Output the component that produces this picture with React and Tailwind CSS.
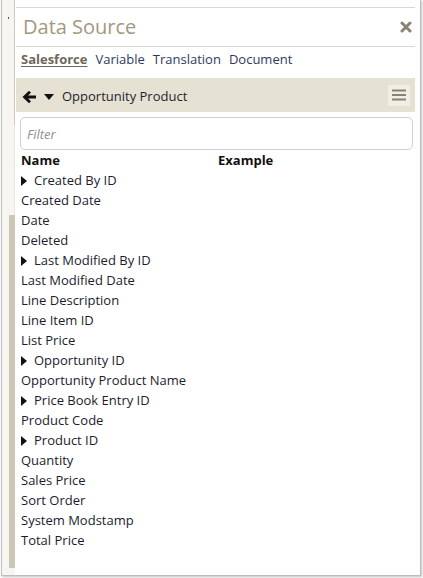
import React from 'react';

const rows = [
  { name: 'Created By ID', child: true },
  { name: 'Created Date' },
  { name: 'Date' },
  { name: 'Deleted' },
  { name: 'Last Modified By ID', child: true },
  { name: 'Last Modified Date' },
  { name: 'Line Description' },
  { name: 'Line Item ID' },
  { name: 'List Price' },
  { name: 'Opportunity ID', child: true },
  { name: 'Opportunity Product Name' },
  { name: 'Price Book Entry ID', child: true },
  { name: 'Product Code' },
  { name: 'Product ID', child: true },
  { name: 'Quantity' },
  { name: 'Sales Price' },
  { name: 'Sort Order' },
  { name: 'System Modstamp' },
  { name: 'Total Price' },
];

const Caret = ({ dir = 'right' }) =>
  dir === 'right' ? (
    <svg width="6" height="10" viewBox="0 0 6 10" className="shrink-0">
      <path d="M0 0 L6 5 L0 10 Z" fill="#111" />
    </svg>
  ) : (
    <svg width="10" height="6" viewBox="0 0 10 6" className="shrink-0">
      <path d="M0 0 L10 0 L5 6 Z" fill="#111" />
    </svg>
  );

export default function App() {
  return (
    <div className="w-[423px] h-[578px] bg-white" style={{ fontFamily: '"Open Sans", "Noto Sans", sans-serif' }}>
      <div className="ml-px w-[420px] h-[576px] flex border-l border-r border-b border-[#bdbdbd] shadow-[1px_1px_2px_rgba(0,0,0,0.25)] bg-white">
        {/* left splitter strip */}
        <div className="w-[13px] shrink-0 flex flex-col bg-[#f6f5f1]">
          <div className="h-[125px] flex justify-end">
            <div className="relative w-px h-full bg-[#cfcabb]">
              <div className="absolute left-[-6px] top-[17px] w-px h-[2px] bg-[#555]" />
            </div>
          </div>
          <div className="h-[90px] flex justify-end">
            <div className="w-px h-full bg-[#ebe8e0]" />
          </div>
          <div className="h-[353px] flex justify-end">
            <div className="w-[6px] h-full bg-[#cdc7b5]" />
          </div>
        </div>

        {/* panel */}
        <div className="flex-1 pl-px pr-[5px]">
          <div className="mt-[7px] border-t border-[#dcd8cf]">
            <div className="h-[39px] flex items-center justify-between pl-[7px] pr-[3px] border-b border-[#dcd8cf]">
              <span className="text-[20px] text-[#a3977f] leading-none">Data Source</span>
              <svg width="12" height="12" viewBox="0 0 12 12">
                <path d="M2 2 L10 10 M10 2 L2 10" stroke="#8b8270" strokeWidth="3" strokeLinecap="round" />
              </svg>
            </div>
            <div className="h-[31px] flex items-center gap-[8px] pl-[5px] pb-[6px] text-[13px]">
              <span className="font-bold text-[#6e675b] underline underline-offset-2">Salesforce</span>
              <span className="text-[#2e3a63]">Variable</span>
              <span className="text-[#2e3a63]">Translation</span>
              <span className="text-[#2e3a63]">Document</span>
            </div>
            <div className="h-[34px] bg-[#e5e1d3] flex items-center pl-[6px] pr-[5px] pt-[3px]">
              <svg width="15" height="14" viewBox="0 0 15 14" className="shrink-0">
                <path d="M14 7 H3.5 M8 1.8 L2.5 7 L8 12.2" stroke="#111" strokeWidth="2.8" fill="none" strokeLinejoin="miter" />
              </svg>
              <span className="ml-[7px]"><Caret dir="down" /></span>
              <span className="ml-[8px] text-[13px] text-[#1f1f2e]">Opportunity Product</span>
              <div className="ml-auto mb-[3px] w-[22px] h-[21px] bg-[#f1eee5] flex items-center justify-center">
                <svg width="14" height="12" viewBox="0 0 14 12">
                  <path d="M0 1.5 H14 M0 6 H14 M0 10.5 H14" stroke="#8b8270" strokeWidth="2.2" />
                </svg>
              </div>
            </div>
            <div className="px-[4px] pt-[5px]">
              <div className="h-[33px] mr-[-2px] border border-[#cfcfcf] rounded-[5px] flex items-center px-[6px] pt-[2px]">
                <span className="text-[13px] italic text-[#8e8e8e]">Filter</span>
              </div>
            </div>
            <div className="pl-[5px] pt-[1px]">
              <div className="h-[20px] flex items-center text-[13px] font-bold text-[#111]">
                <span className="w-[197px]">Name</span>
                <span>Example</span>
              </div>
              {rows.map((r) => (
                <div key={r.name} className="h-[20px] flex items-center text-[13px] text-[#1c1c30]">
                  {r.child && (
                    <span className="mr-[7px] flex"><Caret /></span>
                  )}
                  <span>{r.name}</span>
                </div>
              ))}
            </div>
          </div>
        </div>
      </div>
    </div>
  );
}
